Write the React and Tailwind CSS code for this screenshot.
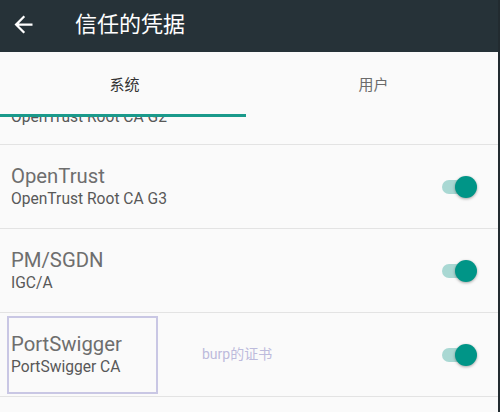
import React from 'react'

const certs = [
  { name: 'OpenTrust', sub: 'OpenTrust Root CA G3' },
  { name: 'PM/SGDN', sub: 'IGC/A' },
  { name: 'PortSwigger', sub: 'PortSwigger CA', note: true },
]

const Toggle = () => (
  <div className="relative w-[32px] h-[14px] rounded-full bg-[#a9d8d3]">
    <div className="absolute right-[-3px] top-1/2 -translate-y-1/2 w-[22px] h-[22px] rounded-full bg-[#009587] shadow-[0_1px_3px_rgba(0,0,0,0.35)]"></div>
  </div>
)

const CertRow = ({ name, sub, note }) => (
  <div className="relative h-[84px] border-b border-[#e3e3e3] flex items-center justify-between pl-[11px] pr-[24px]">
    <div className="flex flex-col">
      <span className="text-[20.3px] leading-[24px] text-[#6e6e6e]">{name}</span>
      <span className="mt-[1px] text-[15.6px] leading-[20px] text-[#585858]">{sub}</span>
    </div>
    <Toggle />
    {note && <>
      <div className="absolute left-[7px] top-[3px] w-[151px] h-[78px] border-2 border-[#c9c7e4]"></div>
      <span className="absolute left-[202px] top-[31px] text-[14px] leading-[20px] text-[#bdbbdc]">burp的证书</span>
    </>}
  </div>
)

export default function App() {
  return (
    <div className="w-[500px] h-[412px] overflow-hidden bg-[#fafafa] border-r-2 border-[#222b30] flex flex-col font-['Roboto','Noto_Sans_CJK_SC',sans-serif]">
      <div className="relative z-10 h-[52px] shrink-0 bg-[#263238] flex items-center pb-[3px] shadow-[0_2px_4px_rgba(0,0,0,0.25)]">
        <svg className="ml-[10px] w-[27px] h-[27px]" viewBox="0 0 24 24" fill="#ffffff">
          <path d="M20 11H7.83l5.59-5.59L12 4l-8 8 8 8 1.41-1.41L7.83 13H20v-2z" />
        </svg>
        <span className="ml-[38px] text-[22px] leading-[28px] text-white">信任的凭据</span>
      </div>

      <div className="relative z-10 h-[65px] shrink-0 flex bg-[#fafafa]">
        <div className="flex-1 flex items-center justify-center pt-[2px] text-[15px] text-[#333333]">系统</div>
        <div className="flex-1 flex items-center justify-center pt-[2px] text-[15px] text-[#6b6b6b]">用户</div>
        <div className="absolute left-0 bottom-0 w-[246px] h-[3px] bg-[#1a9a8b]"></div>
      </div>

      <div className="flex flex-col">
        <div className="h-[28px] overflow-hidden border-b border-[#e3e3e3] pl-[11px]">
          <div className="-mt-[10px] text-[15.6px] leading-[20px] text-[#585858]">OpenTrust Root CA G2</div>
        </div>
        {certs.map((c) => (
          <CertRow key={c.name} {...c} />
        ))}
      </div>
    </div>
  )
}
